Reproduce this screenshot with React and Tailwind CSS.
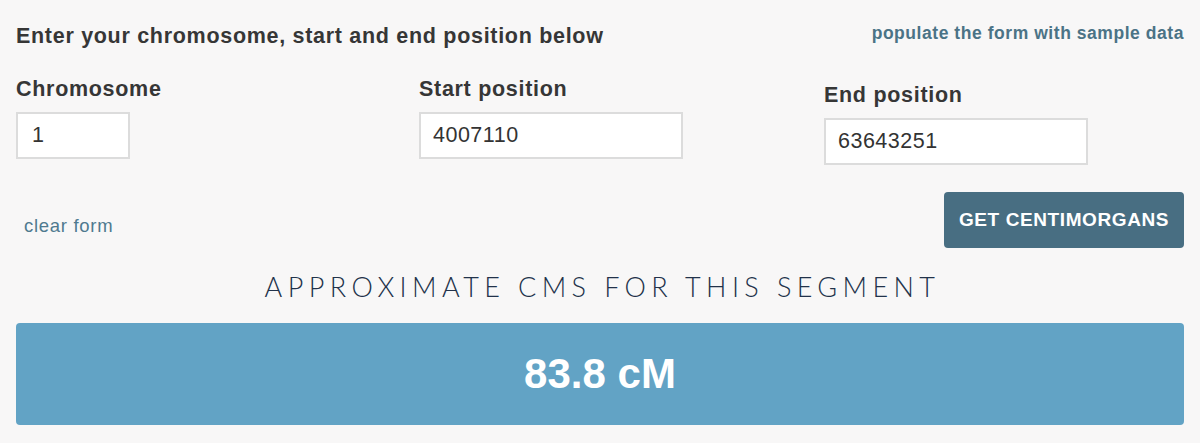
export default function App() {
  return (
    <div className="min-h-[443px] w-[1200px] bg-[#f8f7f7] px-4 font-['Liberation_Sans',Arial,sans-serif]">
      <div className="flex justify-between pt-[26px]">
        <h2 className="text-[21.5px] leading-[21.5px] font-bold text-[#363636] tracking-[0.7px]">
          Enter your chromosome, start and end position below
        </h2>
        <a className="-mt-[1px] text-[17.5px] leading-[17.5px] font-bold text-[#4b7386] tracking-[0.55px] cursor-pointer">
          populate the form with sample data
        </a>
      </div>

      <div className="mt-[31px] grid grid-cols-[403px_405px_1fr] items-start">
        <div className="flex flex-col">
          <label className="text-[21.5px] leading-[21.5px] font-bold text-[#363636] tracking-[0.7px]">Chromosome</label>
          <input
            readOnly
            value="1"
            className="mt-[12px] h-[47px] w-[114px] border-2 border-[#dcdcdc] bg-white pl-[14px] text-[21.5px] tracking-[0.5px] text-[#333] outline-none"
          />
        </div>
        <div className="flex flex-col">
          <label className="text-[21.5px] leading-[21.5px] font-bold text-[#363636] tracking-[0.7px]">Start position</label>
          <input
            readOnly
            value="4007110"
            className="mt-[12px] h-[47px] w-[264px] border-2 border-[#dcdcdc] bg-white pl-[12px] text-[21.5px] tracking-[0.5px] text-[#333] outline-none"
          />
        </div>
        <div className="mt-[6px] flex flex-col">
          <label className="text-[21.5px] leading-[21.5px] font-bold text-[#363636] tracking-[0.7px]">End position</label>
          <input
            readOnly
            value="63643251"
            className="mt-[12px] h-[47px] w-[264px] border-2 border-[#dcdcdc] bg-white pl-[12px] text-[21.5px] tracking-[0.5px] text-[#333] outline-none"
          />
        </div>
      </div>

      <div className="mt-[27px] flex items-start justify-between">
        <a className="mt-[25px] pl-[8px] text-[18.5px] leading-[18.5px] text-[#4f7a8f] tracking-[0.7px] cursor-pointer">
          clear form
        </a>
        <button className="flex h-[56px] w-[240px] items-center justify-center rounded-[4px] bg-[#486e82] text-[19px] font-bold text-white tracking-[0.6px]">
          GET CENTIMORGANS
        </button>
      </div>

      <h3 className="mt-[25px] pl-[5px] text-center font-['Lato',sans-serif] text-[27px] leading-[27px] font-light tracking-[5.4px] text-[#22324a]">
        APPROXIMATE CMS FOR THIS SEGMENT
      </h3>

      <div className="mt-[23px] flex h-[102px] w-full items-center justify-center rounded-[4px] bg-[#62a3c5]">
        <span className="text-[42px] leading-[42px] font-bold text-white">83.8 cM</span>
      </div>
    </div>
  );
}
